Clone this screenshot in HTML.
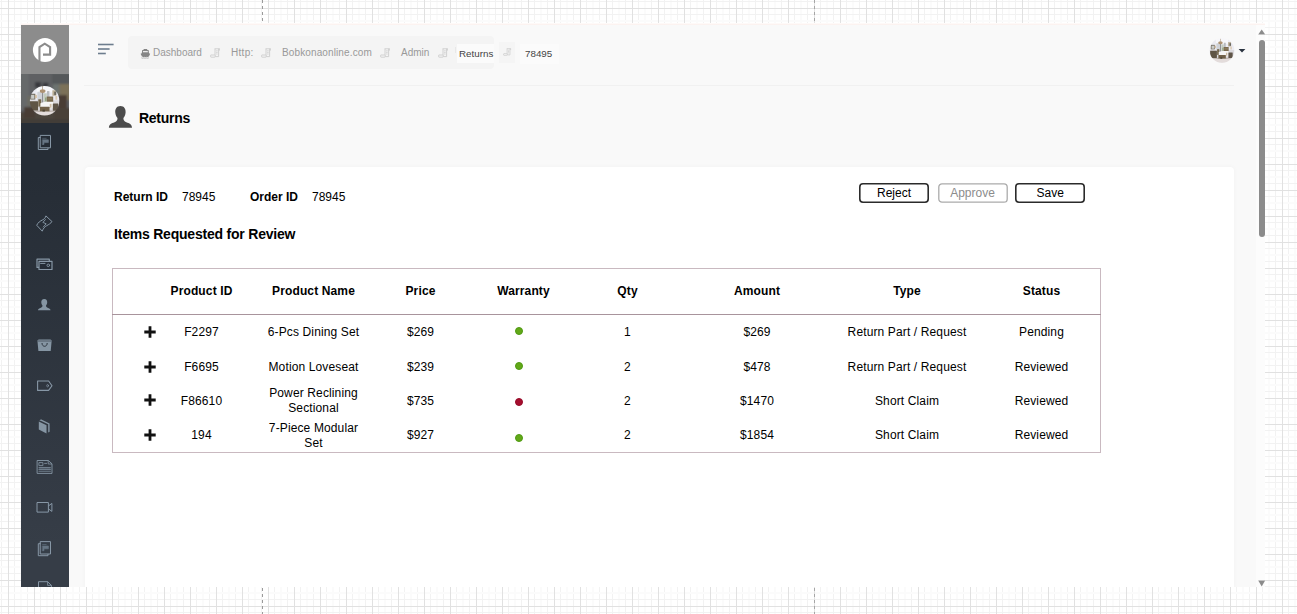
<!DOCTYPE html>
<html lang="en">
<head>
<meta charset="utf-8">
<title>Returns</title>
<style>
html,body{margin:0;padding:0;}
body{width:1297px;height:614px;position:relative;overflow:hidden;background:#fff;font-family:"Liberation Sans",Arial,sans-serif;color:#000;}
.abs{position:absolute;}
#grid{position:absolute;left:0;top:0;width:1297px;height:614px;}
#frame{position:absolute;left:21px;top:25px;width:1244px;height:562px;background:#f9f9f9;overflow:hidden;}
#topline{position:absolute;left:21px;top:23px;width:1244px;height:2px;background:linear-gradient(#fffdfc,#fbefec);}
/* everything inside frame is positioned in page coords via this shifted layer */
#layer{position:absolute;left:-21px;top:-25px;width:1297px;height:614px;}
#side{position:absolute;left:21px;top:25px;width:48px;height:562px;background:linear-gradient(#262d36 0px,#262d36 150px,#363d47 520px);}
#logo{position:absolute;left:21px;top:25px;width:48px;height:49px;background:#8c8c8c;}
#photo{position:absolute;left:21px;top:74px;width:48px;height:49px;overflow:hidden;background:#55585a;}
.sico{position:absolute;left:33px;width:24px;height:24px;}
#bc{position:absolute;left:128px;top:36px;width:366px;height:33px;background:#f4f4f4;border-radius:4px;}
.bct{position:absolute;top:46px;height:14px;line-height:14px;font-size:10px;color:#999;white-space:nowrap;}
.sep{position:absolute;top:48px;width:11px;height:10px;}
#hline{position:absolute;left:84px;top:85px;width:1150px;height:1px;background:#f1f1f1;}
#title{position:absolute;left:139px;top:110px;letter-spacing:-0.28px;font-size:14px;font-weight:bold;line-height:16px;color:#000;white-space:nowrap;}
#card{position:absolute;left:85px;top:167px;width:1149px;height:440px;background:#fff;border-radius:4px 4px 0 0;box-shadow:0 0 5px rgba(0,0,0,0.035);}
.lbl{position:absolute;font-size:12px;line-height:14px;white-space:nowrap;color:#000;}
.b{font-weight:bold;}
.btn{position:absolute;top:183px;width:70px;height:20px;font-size:12px;line-height:20px;text-align:center;color:#000;}
.btn svg{position:absolute;left:0;top:0;}
.btn span{position:relative;top:-0.5px;}
.btn.dis{color:#8c8c8c;}
#tbl{position:absolute;left:112px;top:268px;width:987px;height:183px;border:1px solid #c9b9c0;}
#thl{position:absolute;left:112px;top:314px;width:989px;height:1px;background:#a8949c;}
.c{position:absolute;width:160px;margin-left:-80px;text-align:center;font-size:12px;line-height:15px;color:#000;letter-spacing:0.13px;}
.h{font-weight:bold;}
.plus{position:absolute;left:144.1px;width:12px;height:12px;}
.dot{position:absolute;left:515px;width:6px;height:6px;border-radius:50%;background:#62a818;border:1px solid #4f9a12;}
.dot.red{background:#a50e2e;border-color:#960a28;}
#sbtrack{position:absolute;left:1256px;top:25px;width:9px;height:562px;background:#fcfcfc;}
#sbthumb{position:absolute;left:1259px;top:40px;width:6px;height:197px;background:#8b8b8b;border-radius:3px;}
</style>
</head>
<body>
<svg id="grid" width="1297" height="614" shape-rendering="crispEdges">
  <defs>
    <pattern id="gp" x="8" y="8" width="26" height="26" patternUnits="userSpaceOnUse">
      <rect x="6" y="0" width="1" height="26" fill="#f2f2f2"/>
      <rect x="12" y="0" width="2" height="26" fill="#fbfbfb"/>
      <rect x="19" y="0" width="1" height="26" fill="#f2f2f2"/>
      <rect x="0" y="6" width="26" height="1" fill="#f2f2f2"/>
      <rect x="0" y="12" width="26" height="2" fill="#fbfbfb"/>
      <rect x="0" y="19" width="26" height="1" fill="#f2f2f2"/>
      <rect x="0" y="0" width="1" height="26" fill="#e1e1e1"/>
      <rect x="0" y="0" width="26" height="1" fill="#e1e1e1"/>
    </pattern>
  </defs>
  <rect width="1297" height="614" fill="#fff"/>
  <rect width="1297" height="614" fill="url(#gp)"/>
  <line x1="262.5" y1="0" x2="262.5" y2="614" stroke="#9a9a9a" stroke-width="1" stroke-dasharray="3 3"/>
  <line x1="814.5" y1="0" x2="814.5" y2="614" stroke="#a6a6a6" stroke-width="1" stroke-dasharray="3 3"/>
</svg>
<svg width="0" height="0" style="position:absolute">
  <defs>
    <symbol id="room" viewBox="40 45 540 500" preserveAspectRatio="none">
      <rect x="0" y="0" width="620" height="620" fill="#ebebf2"/>
      <rect x="180" y="40" width="260" height="120" fill="#f7f7fa"/>
      <rect x="40" y="440" width="540" height="120" fill="#ecebee"/>
      <rect x="40" y="285" width="540" height="160" fill="#dcdade"/>
      <ellipse cx="310" cy="495" rx="220" ry="45" fill="#e3dcdb"/>
      <ellipse cx="300" cy="452" rx="235" ry="14" fill="#bdb4ae"/>
      <!-- window & drapes -->
      <rect x="190" y="150" width="60" height="150" fill="#cfd2d8"/>
      <rect x="262" y="150" width="26" height="200" fill="#8e9194"/>
      <rect x="296" y="175" width="50" height="135" fill="#c3cbbd"/>
      <rect x="318" y="240" width="22" height="60" fill="#8da37c"/>
      <rect x="350" y="140" width="40" height="90" fill="#b9bcc0"/>
      <!-- chandelier -->
      <rect x="272" y="60" width="10" height="60" fill="#9c8468"/>
      <ellipse cx="277" cy="140" rx="48" ry="30" fill="#ad9272"/>
      <!-- left mirror + dresser -->
      <rect x="70" y="182" width="85" height="90" fill="#6f685b"/>
      <rect x="85" y="198" width="55" height="62" fill="#c9cbc9"/>
      <rect x="150" y="200" width="30" height="50" fill="#d3bda0"/>
      <rect x="56" y="298" width="145" height="145" rx="8" fill="#5f5545"/>
      <rect x="205" y="268" width="48" height="115" fill="#74664c"/>
      <!-- right mirror / lamp -->
      <rect x="440" y="128" width="62" height="85" fill="#b9ad94"/>
      <rect x="470" y="150" width="34" height="50" fill="#6a675e"/>
      <rect x="490" y="215" width="30" height="60" fill="#dccbb2"/>
      <!-- bed -->
      <rect x="345" y="225" width="108" height="90" fill="#7a6b50"/>
      <rect x="360" y="245" width="78" height="30" fill="#8a7a5c"/>
      <path d="M240 335 Q250 312 345 306 L452 306 L452 410 L240 410 Z" fill="#f5f5f5"/>
      <rect x="395" y="340" width="30" height="60" fill="#cdbca6"/>
      <rect x="232" y="385" width="160" height="72" rx="6" fill="#6f6149"/>
      <rect x="275" y="430" width="40" height="30" fill="#4d4436"/>
      <rect x="447" y="334" width="92" height="112" rx="8" fill="#61574a"/>
    </symbol>
    <symbol id="plus" viewBox="0 0 12 12"><path d="M6 0.3 V11.7 M0.3 6 H11.7" stroke="#111" stroke-width="2.8" fill="none"/></symbol>
    <symbol id="sep" viewBox="0 0 11 10">
      <path d="M4.6 0.8 H9.6 M5 0.8 V8.6 M8.6 0.8 V8.6 H5.4 M9.4 0.6 V2.6 M6.2 2.8 H7.6 M6.2 4.4 H7.6 M6.2 6 H7.6" fill="none" stroke="#cdcdcd" stroke-width="0.9"/>
      <rect x="0.6" y="7" width="4.6" height="2.2" rx="0.6" fill="#f4f4f4" stroke="#cdcdcd" stroke-width="0.9"/>
    </symbol>
    <clipPath id="cpA"><circle cx="44.6" cy="100.75" r="14.7"/></clipPath>
    <clipPath id="cpB"><circle cx="1222" cy="50.5" r="12.4"/></clipPath>
    <filter id="bl1" x="-10%" y="-10%" width="120%" height="120%"><feGaussianBlur stdDeviation="0.6"/></filter>
    <filter id="bl2" x="-10%" y="-10%" width="120%" height="120%"><feGaussianBlur stdDeviation="0.8"/></filter>
  </defs>
</svg>
<div id="topline"></div>
<div id="frame"><div id="layer">
  <div id="side"></div>
  <div id="logo"></div>
  <div id="photo"></div>
  <svg class="abs" style="left:21px;top:74px;" width="48" height="49" viewBox="21 74 48 49">
    <g filter="url(#bl2)">
      <rect x="15" y="70" width="60" height="60" fill="#5e6163"/>
      <rect x="15" y="70" width="14" height="40" fill="#66696b"/>
      <rect x="52" y="74" width="20" height="10" fill="#55585a"/>
      <rect x="59" y="84" width="11" height="16" fill="#7b7159"/>
      <rect x="53" y="84" width="6.5" height="12" fill="#6c7270"/>
      <rect x="35" y="82" width="6" height="5.6" fill="#37373c"/>
      <rect x="42.7" y="82.8" width="5.6" height="4" fill="#37373c"/>
      <rect x="58" y="95" width="9" height="17" fill="#4a3c35"/>
      <rect x="15" y="112" width="60" height="14" fill="#4b443d"/>
      <rect x="24" y="107" width="11" height="11" fill="#493c35"/>
      <rect x="54" y="108" width="18" height="12" fill="#4a4039"/>
      <rect x="27" y="96" width="5" height="10" fill="#6a6a62"/>
      <rect x="15" y="119" width="60" height="8" fill="#433e39"/>
    </g>
    <g clip-path="url(#cpA)"><g filter="url(#bl1)"><use href="#room" x="28.4" y="85" width="32.4" height="32"/></g></g>
  </svg>
  <svg class="abs" style="left:21px;top:25px;" width="48" height="562" viewBox="21 25 48 562">
    <!-- logo -->
    <circle cx="45" cy="50" r="12.1" fill="#fff"/>
    <path d="M39.45 62.5 L39.45 47.1 L44.75 43.7 L50.1 47.1 L50.1 54.65 L43 54.65" fill="none" stroke="#8c8c8c" stroke-width="2.1" stroke-linejoin="miter"/>
    <g fill="none" stroke="#8797a6" stroke-width="1" stroke-linejoin="round" stroke-linecap="round">
      <!-- docs -->
      <g id="docs">
        <path d="M40.5 137.5 H38.3 V149.5 H48 V148"/>
        <rect x="40.6" y="135.4" width="9.9" height="12.4" fill="#252c35"/>
        <path d="M42.6 138.3 H46.2 M42.6 139.8 H48.4 V142.6 H44 V144.5 H42.6 Z" fill="#677584" stroke="#677584" stroke-width="0.6"/>
      </g>
      <!-- money -->
      <path d="M36.9 224.9 C38 222.6 40 221 42.8 219.8 C44.5 219 45.4 217.8 45.9 215.9 L52 221.6 C50.8 223.4 48.6 224.6 46.7 225.7 C44.6 226.9 43.2 228.4 42.4 230.8 Z"/>
      <path d="M45.4 219.6 L42.9 222.4 L46.2 223.8 L43.3 227" stroke-width="0.9"/>
      <!-- cards -->
      <path d="M39 267.4 H37 V259.2 H49.3 V261" stroke-width="1.2"/>
      <rect x="39" y="261.3" width="13" height="8.2" stroke-width="1.2" fill="#242c36"/>
      <path d="M40.6 263.4 H45" stroke-width="1"/>
      <circle cx="48.3" cy="265.3" r="1.3" stroke-width="0.9"/>
      <!-- tag -->
      <path d="M37.6 381 H48.6 L52 385.7 L48.6 390.4 H37.6 Z" stroke-width="1.1"/>
      <ellipse cx="47.6" cy="385.7" rx="0.9" ry="1.2" stroke-width="0.7"/>
      <!-- newspaper -->
      <path d="M37.5 460.5 H48.3 L52 463.8 V473.4 H37.5 Z" stroke-width="0.9"/>
      <rect x="39.3" y="462.6" width="3.6" height="3" stroke-width="0.8"/>
      <path d="M44.6 463.4 H46.6 M48.2 460.8 V464 H51.6" stroke-width="0.8"/>
      <path d="M39 467.6 H50.4 M39 469.4 H50.4 M39 471.2 H50.4" stroke="#6f7d8b" stroke-width="1.1"/>
      <!-- video -->
      <rect x="37.4" y="502.5" width="11" height="9.6" stroke-width="1"/>
      <path d="M48.6 505.8 L51.9 503.4 V511.4 L48.6 509 " stroke-width="1"/>
      <!-- docs 2 -->
      <g transform="translate(0 406.2)">
        <path d="M40.5 137.5 H38.3 V149.5 H48 V148"/>
        <rect x="40.6" y="135.4" width="9.9" height="12.4" fill="#363e48"/>
        <path d="M42.6 138.3 H46.2 M42.6 139.8 H48.4 V142.6 H44 V144.5 H42.6 Z" fill="#677584" stroke="#677584" stroke-width="0.6"/>
      </g>
      <!-- file (cut off) -->
      <path d="M38.5 590 V581.7 H47.6 L51.4 585.4 V590" stroke-width="1"/>
      <path d="M47.6 581.9 V585.4 H51.2" stroke-width="0.8"/>
    </g>
    <g fill="#8595a3" stroke="none">
      <!-- user -->
      <path d="M44.3 299 C46.4 299 47.4 300.6 47.2 302.6 C47.1 304 46.6 305 46 305.6 C46 306.8 46.4 307.2 47.6 307.7 C49.2 308.3 50.4 308.6 50.5 310.3 H38 C38.1 308.6 39.3 308.3 40.9 307.7 C42.1 307.2 42.5 306.8 42.5 305.6 C41.9 305 41.4 304 41.3 302.6 C41.1 300.6 42.2 299 44.3 299 Z"/>
      <!-- bag -->
      <path d="M37.4 340.6 L38.6 339.5 H50.5 L51.7 340.6 L50.7 351 H38.4 Z"/>
      <path d="M42 343 C42 347.4 47.2 347.4 47.2 343" fill="none" stroke="#2c343e" stroke-width="1"/>
      <path d="M37.8 341 H51.3" stroke="#2c343e" stroke-width="0.6" fill="none"/>
      <!-- book -->
      <path d="M38.8 421.6 L46.5 425.3 V433.5 L38.8 429.6 Z"/>
      <path d="M39.4 420.8 L40.9 419.3 L49.6 423.5 V431.7 L48.2 432.5 V424.3 L40.6 420.7 Z"/>
    </g>
  </svg>

  <div id="bc"></div>
  <svg class="abs" style="left:96px;top:42px;" width="22" height="14" viewBox="96 42 22 14">
    <rect x="98" y="43.7" width="15.6" height="1.6" fill="#6d7d8e"/>
    <rect x="98" y="48.2" width="11.6" height="1.6" fill="#6d7d8e"/>
    <rect x="98" y="52.7" width="7.8" height="1.6" fill="#6d7d8e"/>
  </svg>
  <svg class="abs" style="left:140px;top:48px;" width="11" height="11" viewBox="0 0 11 11">
    <path d="M3.6 0.9 H7.2 V2 H8.6 L9 5.2 L10.2 5.8 L8.9 8.6 Q7.4 9.3 6.4 8.7 Q5.4 9.4 4.4 8.7 Q3.4 9.3 1.9 8.6 L0.6 5.8 L1.8 5.2 L2.2 2 H3.6 Z" fill="#858585"/>
    <rect x="3" y="3" width="4.8" height="1.3" fill="#e9e9e9"/>
    <path d="M1.4 9.9 Q2.6 10.5 3.8 9.9 Q5 10.5 6.2 9.9 Q7.4 10.5 8.8 9.9" fill="none" stroke="#9a9a9a" stroke-width="0.7"/>
  </svg>
  <div class="bct" style="left:153px;">Dashboard</div>
  <svg class="sep" style="left:209.5px;"><use href="#sep" width="11" height="10"/></svg>
  <div class="bct" style="left:231px;letter-spacing:0.3px;">Http:</div>
  <svg class="sep" style="left:260.5px;"><use href="#sep" width="11" height="10"/></svg>
  <div class="bct" style="left:282px;letter-spacing:0.12px;">Bobkonaonline.com</div>
  <svg class="sep" style="left:379.5px;"><use href="#sep" width="11" height="10"/></svg>
  <div class="bct" style="left:401px;">Admin</div>
  <svg class="sep" style="left:437.5px;"><use href="#sep" width="11" height="10"/></svg>
  <div class="abs" style="left:455px;top:47px;width:1px;height:6px;background:#e8e8e8;"></div>
  <div class="abs" style="left:457px;top:44px;width:37px;height:19px;background:#fbfbfb;"></div>
  <div class="bct" style="left:459px;top:47px;color:#444;font-size:9.8px;">Returns</div>
  <div class="abs" style="left:499px;top:42px;width:16px;height:21px;background:#f5f5f5;"></div>
  <svg class="sep" style="left:502.5px;top:48px;width:9px;height:8px;"><use href="#sep" width="9" height="8"/></svg>
  <div class="abs" style="left:520px;top:44px;width:39px;height:20px;background:#fbfbfb;"></div>
  <div class="bct" style="left:525px;top:47px;color:#444;font-size:9.8px;">78495</div>
  <div id="hline"></div>
  <svg class="abs" style="left:108px;top:105px;" width="25" height="24" viewBox="108 105 25 24">
    <path d="M120.4 106 C124.2 106 125.9 108.9 125.6 112.6 C125.4 115.2 124.5 117 123.4 118.1 C123.4 120.4 124.1 121.3 126.3 122.2 C129.4 123.4 131.8 124 132 127.8 H108.9 C109.1 124 111.5 123.4 114.6 122.2 C116.8 121.3 117.5 120.4 117.5 118.1 C116.4 117 115.5 115.2 115.3 112.6 C115 108.9 116.6 106 120.4 106 Z" fill="#4c4c4c"/>
  </svg>
  <div id="title">Returns</div>

  <div id="card"></div>
  <div class="lbl b" style="left:114px;top:190px;">Return ID</div>
  <div class="lbl" style="left:182px;top:190px;">78945</div>
  <div class="lbl b" style="left:250px;top:190px;">Order ID</div>
  <div class="lbl" style="left:312px;top:190px;">78945</div>
  <div class="lbl b" style="left:114px;top:226px;font-size:14px;letter-spacing:-0.21px;line-height:16px;">Items Requested for Review</div>

  <div class="btn" style="left:859px;"><svg width="70" height="20"><rect x="0.8" y="0.8" width="68.4" height="18.4" rx="3.2" fill="#fff" stroke="#2b2b2b" stroke-width="1.6"/></svg><span>Reject</span></div>
  <div class="btn dis" style="left:937.5px;"><svg width="70" height="20"><rect x="0.8" y="0.8" width="68.4" height="18.4" rx="3.2" fill="#fff" stroke="#ababab" stroke-width="1.3"/></svg><span>Approve</span></div>
  <div class="btn" style="left:1015.3px;"><svg width="70" height="20"><rect x="0.8" y="0.8" width="68.4" height="18.4" rx="3.2" fill="#fff" stroke="#2b2b2b" stroke-width="1.6"/></svg><span>Save</span></div>

  <div id="tbl"></div>
  <div id="thl"></div>
  <div class="c h" style="left:201.5px;top:284px;">Product ID</div>
  <div class="c h" style="left:313.5px;top:284px;">Product Name</div>
  <div class="c h" style="left:420.5px;top:284px;">Price</div>
  <div class="c h" style="left:523.5px;top:284px;">Warranty</div>
  <div class="c h" style="left:627.5px;top:284px;">Qty</div>
  <div class="c h" style="left:757px;top:284px;">Amount</div>
  <div class="c h" style="left:907px;top:284px;">Type</div>
  <div class="c h" style="left:1041.5px;top:284px;">Status</div>
  <svg class="plus" style="top:325.6px;"><use href="#plus" width="12" height="12"/></svg>
  <div class="c" style="left:201.5px;top:325px;">F2297</div>
  <div class="c" style="left:313.5px;top:325px;">6-Pcs Dining Set</div>
  <div class="c" style="left:420.5px;top:325px;">$269</div>
  <div class="dot" style="top:327px;"></div>
  <div class="c" style="left:627.5px;top:325px;">1</div>
  <div class="c" style="left:757px;top:325px;">$269</div>
  <div class="c" style="left:907px;top:325px;">Return Part / Request</div>
  <div class="c" style="left:1041.5px;top:325px;">Pending</div>
  <svg class="plus" style="top:360.8px;"><use href="#plus" width="12" height="12"/></svg>
  <div class="c" style="left:201.5px;top:360px;">F6695</div>
  <div class="c" style="left:313.5px;top:360px;">Motion Loveseat</div>
  <div class="c" style="left:420.5px;top:360px;">$239</div>
  <div class="dot" style="top:362px;"></div>
  <div class="c" style="left:627.5px;top:360px;">2</div>
  <div class="c" style="left:757px;top:360px;">$478</div>
  <div class="c" style="left:907px;top:360px;">Return Part / Request</div>
  <div class="c" style="left:1041.5px;top:360px;">Reviewed</div>
  <svg class="plus" style="top:394.4px;"><use href="#plus" width="12" height="12"/></svg>
  <div class="c" style="left:201.5px;top:394px;">F86610</div>
  <div class="c" style="left:313.5px;top:386px;">Power Reclining<br>Sectional</div>
  <div class="c" style="left:420.5px;top:394px;">$735</div>
  <div class="dot red" style="top:398px;"></div>
  <div class="c" style="left:627.5px;top:394px;">2</div>
  <div class="c" style="left:757px;top:394px;">$1470</div>
  <div class="c" style="left:907px;top:394px;">Short Claim</div>
  <div class="c" style="left:1041.5px;top:394px;">Reviewed</div>
  <svg class="plus" style="top:429.4px;"><use href="#plus" width="12" height="12"/></svg>
  <div class="c" style="left:201.5px;top:428px;">194</div>
  <div class="c" style="left:313.5px;top:421px;">7-Piece Modular<br>Set</div>
  <div class="c" style="left:420.5px;top:428px;">$927</div>
  <div class="dot" style="top:434px;"></div>
  <div class="c" style="left:627.5px;top:428px;">2</div>
  <div class="c" style="left:757px;top:428px;">$1854</div>
  <div class="c" style="left:907px;top:428px;">Short Claim</div>
  <div class="c" style="left:1041.5px;top:428px;">Reviewed</div>
  <svg class="abs" style="left:1205px;top:34px;" width="46" height="34" viewBox="1205 34 46 34">
    <g clip-path="url(#cpB)"><g filter="url(#bl1)"><use href="#room" x="1209.4" y="38" width="25.2" height="25"/></g></g>
    <path d="M1238.6 49 H1245.4 L1242 52.4 Z" fill="#2a3340"/>
  </svg>
  <div id="sbtrack"></div>
  <div id="sbthumb"></div>
  <svg class="abs" style="left:1256px;top:25px;" width="9" height="562" viewBox="1256 25 9 562">
    <path d="M1258.2 34.6 L1261.7 29.4 L1265.2 34.6 Z" fill="#8b8b8b"/>
    <path d="M1258.2 580.4 L1261.7 586.4 L1265.2 580.4 Z" fill="#8b8b8b"/>
  </svg>
</div></div>
</body>
</html>
